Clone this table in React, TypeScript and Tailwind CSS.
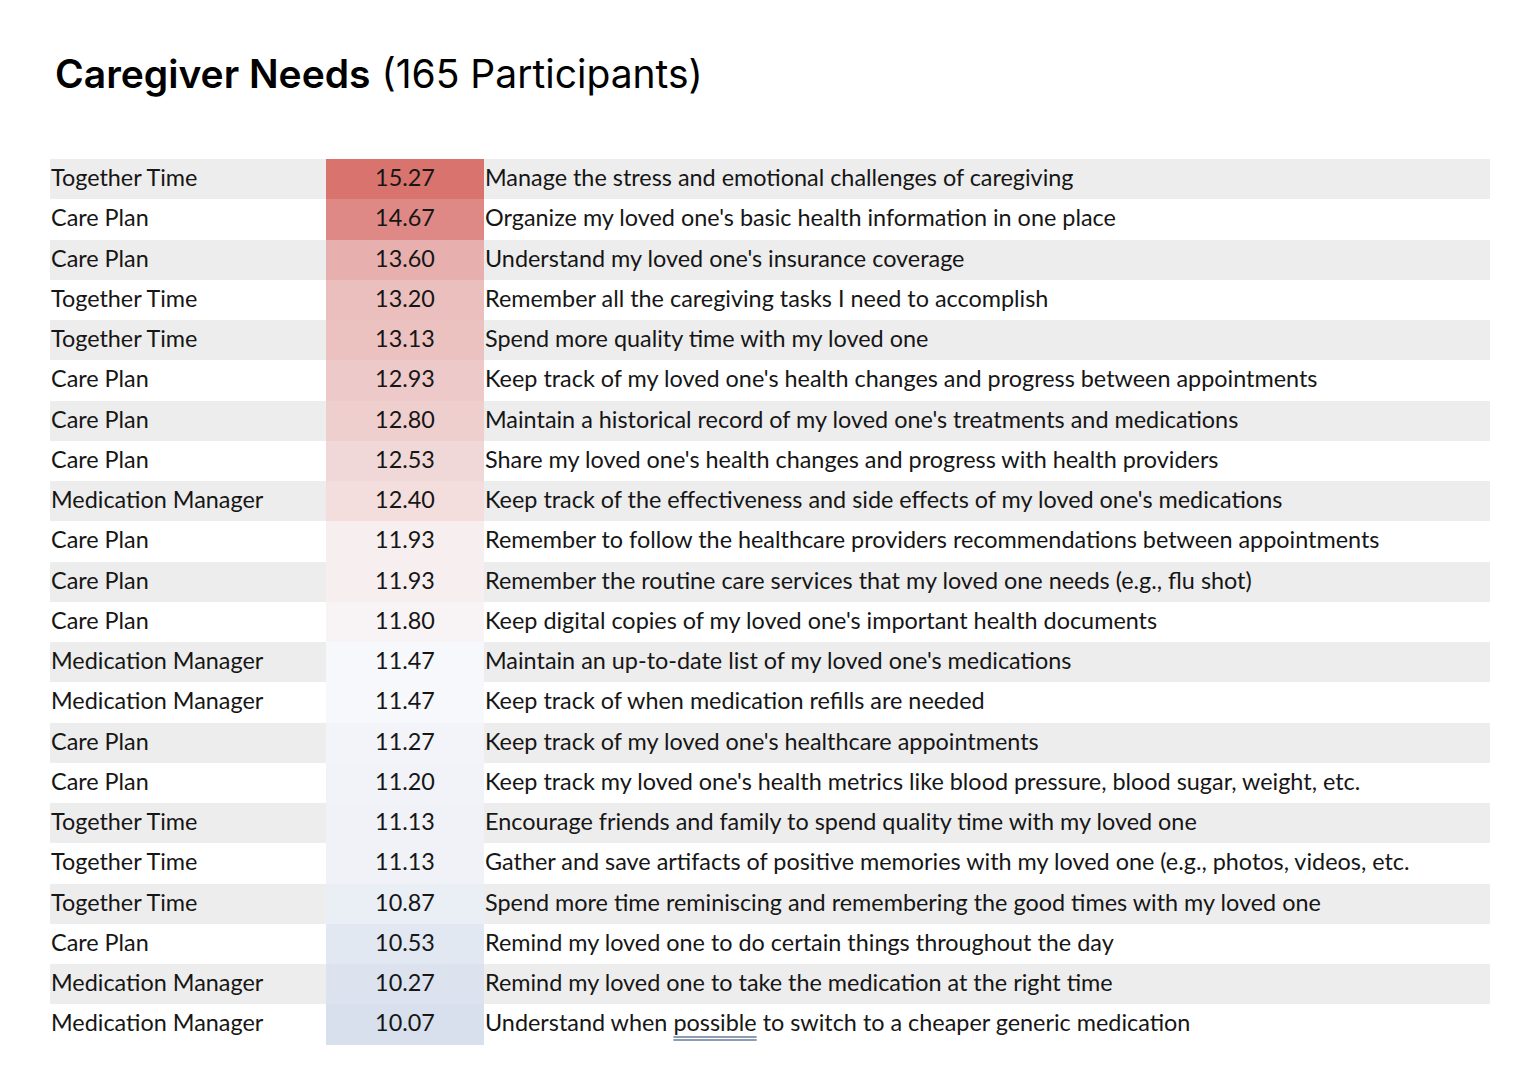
import React from "react";

type Need = {
  area: string;
  score: number;
  text: React.ReactNode;
};

const needs: Need[] = [
  { area: "Together Time", score: 15.27, text: "Manage the stress and emotional challenges of caregiving" },
  { area: "Care Plan", score: 14.67, text: "Organize my loved one's basic health information in one place" },
  { area: "Care Plan", score: 13.6, text: "Understand my loved one's insurance coverage" },
  { area: "Together Time", score: 13.2, text: "Remember all the caregiving tasks I need to accomplish" },
  { area: "Together Time", score: 13.13, text: "Spend more quality time with my loved one" },
  { area: "Care Plan", score: 12.93, text: "Keep track of my loved one's health changes and progress between appointments" },
  { area: "Care Plan", score: 12.8, text: "Maintain a historical record of my loved one's treatments and medications" },
  { area: "Care Plan", score: 12.53, text: "Share my loved one's health changes and progress with health providers" },
  { area: "Medication Manager", score: 12.4, text: "Keep track of the effectiveness and side effects of my loved one's medications" },
  { area: "Care Plan", score: 11.93, text: "Remember to follow the healthcare providers recommendations between appointments" },
  { area: "Care Plan", score: 11.93, text: "Remember the routine care services that my loved one needs (e.g., flu shot)" },
  { area: "Care Plan", score: 11.8, text: "Keep digital copies of my loved one's important health documents" },
  { area: "Medication Manager", score: 11.47, text: "Maintain an up-to-date list of my loved one's medications" },
  { area: "Medication Manager", score: 11.47, text: "Keep track of when medication refills are needed" },
  { area: "Care Plan", score: 11.27, text: "Keep track of my loved one's healthcare appointments" },
  { area: "Care Plan", score: 11.2, text: "Keep track my loved one's health metrics like blood pressure, blood sugar, weight, etc." },
  { area: "Together Time", score: 11.13, text: "Encourage friends and family to spend quality time with my loved one" },
  { area: "Together Time", score: 11.13, text: "Gather and save artifacts of positive memories with my loved one (e.g., photos, videos, etc." },
  { area: "Together Time", score: 10.87, text: "Spend more time reminiscing and remembering the good times with my loved one" },
  { area: "Care Plan", score: 10.53, text: "Remind my loved one to do certain things throughout the day" },
  { area: "Medication Manager", score: 10.27, text: "Remind my loved one to take the medication at the right time" },
  {
    area: "Medication Manager",
    score: 10.07,
    text: (
      <>
        Understand when{" "}
        <span className="underline decoration-double decoration-[#8e9bb5] decoration-[1.5px] underline-offset-[5px]">
          possible
        </span>{" "}
        to switch to a cheaper generic medication
      </>
    ),
  },
];

// heatmap: red at the top, white around 11.6, blue at the bottom
const RED = [216, 115, 110];
const WHITE = [250, 250, 252];
const BLUE = [216, 224, 237];
const MID = 11.6;

function heat(score: number) {
  let to = RED;
  let t = 0;
  if (score >= MID) {
    t = (score - MID) / (15.27 - MID);
  } else {
    t = (MID - score) / (MID - 10.07);
    to = BLUE;
  }
  t = Math.max(0, Math.min(1, t));
  const c = WHITE.map((v, i) => Math.round(v + (to[i] - v) * t));
  return `rgb(${c[0]}, ${c[1]}, ${c[2]})`;
}

const NeedRow: React.FC<{ need: Need; striped: boolean }> = ({ need, striped }) => {
  return (
    <div className={`flex h-[40.25px] items-center ${striped ? "bg-[#ededed]" : "bg-white"}`}>
      <div className="w-[276px] shrink-0 pb-[4px] pl-[1px]">{need.area}</div>
      <div
        className="flex h-full w-[158px] shrink-0 items-center justify-center pb-[4px]"
        style={{ backgroundColor: heat(need.score) }}
      >
        {need.score.toFixed(2)}
      </div>
      <div className="whitespace-nowrap pb-[4px] pl-[1px]">{need.text}</div>
    </div>
  );
};

export default function App() {
  return (
    <div className="min-h-screen bg-white">
      <div className="pl-[55px] pt-[50px]">
        <h1
          className="text-[39px] leading-[48px] text-black"
          style={{ fontFamily: "Inter, 'Noto Sans', sans-serif" }}
        >
          <span className="font-semibold">Caregiver Needs</span>{" "}
          <span className="font-normal">(165 Participants)</span>
        </h1>
      </div>

      <div
        className="ml-[50px] mt-[61px] w-[1440px] text-[23.4px] leading-[28px] text-[#161616]"
        style={{ fontFamily: "Lato, 'Liberation Sans', sans-serif" }}
      >
        {needs.map((need, i) => (
          <NeedRow key={i} need={need} striped={i % 2 === 0} />
        ))}
      </div>
    </div>
  );
}
